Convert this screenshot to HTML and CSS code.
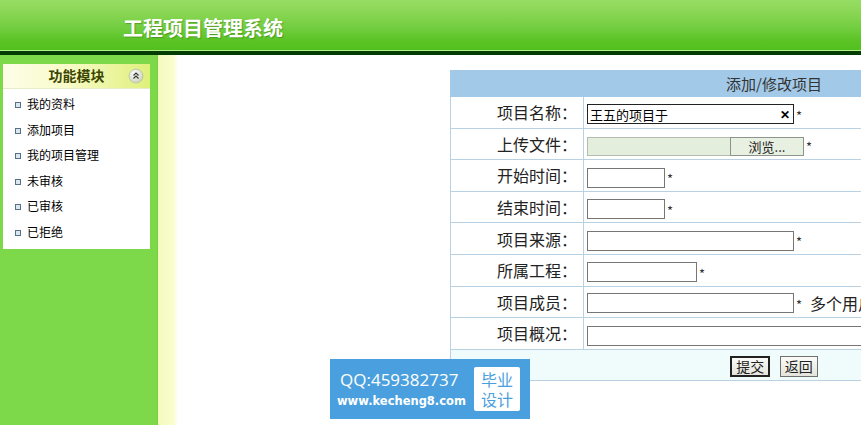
FILE: index.html
```html
<!DOCTYPE html>
<html lang="zh-CN">
<head>
    <meta charset="UTF-8">
    <title>工程项目管理系统</title>
    <link rel="stylesheet" href="styles.css">
</head>
<body>
    <div class="top">
        <h1>工程项目管理系统</h1>
    </div>

    <div class="frame">
        <div class="left">
            <div class="menu">
                <div class="menu-head">
                    功能模块
                    <svg class="fold" width="16" height="16" viewBox="0 0 16 16">
                        <defs>
                            <radialGradient id="knob" cx="40%" cy="35%" r="70%">
                                <stop offset="0" stop-color="#ffffff"/>
                                <stop offset="1" stop-color="#c8d0b8"/>
                            </radialGradient>
                        </defs>
                        <circle cx="8" cy="8" r="7" fill="url(#knob)" stroke="#b8c0a0" stroke-width="0.8"/>
                        <path d="M5.5 7.5 L8 5 L10.5 7.5 M5.5 10.5 L8 8 L10.5 10.5" fill="none" stroke="#333" stroke-width="1.2"/>
                    </svg>
                </div>
                <ul class="menu-list">
                    <li><a href="#">我的资料</a></li>
                    <li><a href="#">添加项目</a></li>
                    <li><a href="#">我的项目管理</a></li>
                    <li><a href="#">未审核</a></li>
                    <li><a href="#">已审核</a></li>
                    <li><a href="#">已拒绝</a></li>
                </ul>
            </div>
        </div>
        <div class="split"></div>
        <div class="main">
            <table class="form">
                <colgroup>
                    <col class="col-label">
                    <col>
                </colgroup>
                <tr>
                    <th colspan="2">添加/修改项目</th>
                </tr>
                <tr>
                    <td class="label">项目名称：</td>
                    <td>
                        <span class="clear-box">
                            <input type="text" class="txt wide" value="王五的项目于">
                            <span class="clear">✕</span>
                        </span><span class="star">*</span>
                    </td>
                </tr>
                <tr>
                    <td class="label">上传文件：</td>
                    <td>
                        <span class="file">
                            <span class="file-path"></span><span class="file-btn">浏览...</span>
                        </span><span class="star">*</span>
                    </td>
                </tr>
                <tr>
                    <td class="label">开始时间：</td>
                    <td><input type="text" class="txt date"><span class="star">*</span></td>
                </tr>
                <tr>
                    <td class="label">结束时间：</td>
                    <td><input type="text" class="txt date"><span class="star">*</span></td>
                </tr>
                <tr>
                    <td class="label">项目来源：</td>
                    <td><input type="text" class="txt wide"><span class="star">*</span></td>
                </tr>
                <tr>
                    <td class="label">所属工程：</td>
                    <td><input type="text" class="txt mid"><span class="star">*</span></td>
                </tr>
                <tr>
                    <td class="label">项目成员：</td>
                    <td><input type="text" class="txt wide"><span class="star">*</span><span class="tip">多个用户以逗号隔开</span></td>
                </tr>
                <tr>
                    <td class="label">项目概况：</td>
                    <td><input type="text" class="txt full"></td>
                </tr>
                <tr>
                    <td colspan="2" class="actions">
                        <button class="btn default">提交</button>
                        <button class="btn">返回</button>
                    </td>
                </tr>
            </table>
        </div>
    </div>

    <div class="ad">
        <div class="ad-text">
            <div class="ad-qq">QQ:459382737</div>
            <div class="ad-site">www.kecheng8.com</div>
        </div>
        <div class="ad-tag">毕业<br>设计</div>
    </div>
</body>
</html>
```

FILE: styles.css
```css
body {
    margin: 0;
    overflow: hidden;
    font-family: "Liberation Sans", "Noto Sans CJK SC", sans-serif;
    background-color: #fff;
}

/* top banner */
.top {
    height: 50px;
    background: linear-gradient(to bottom, #96dd64 0%, #8ad654 25%, #72ce40 55%, #5cc426 80%, #52c01e 100%);
    border-bottom: 1px solid #b4f088;
    box-shadow: 0 4px 0 #033d03;
    margin-bottom: 4px;
}
.top h1 {
    margin: 0;
    padding-left: 123px;
    line-height: 56px;
    font-size: 20px;
    font-weight: bold;
    color: #fff;
    font-family: "Noto Sans CJK SC", sans-serif;
    text-shadow: 1px 1px 1px rgba(40, 90, 10, 0.4);
}

.frame {
    display: flex;
    height: 370px;
}

/* left menu */
.left {
    width: 147px;
    background-color: #7dd84a;
    padding: 9px 7px 0 3px;
}
.menu {
    background-color: #fff;
    height: 185px;
}
.menu-head {
    position: relative;
    height: 24px;
    line-height: 22px;
    text-align: center;
    font-size: 14px;
    font-weight: bold;
    color: #3c4600;
    font-family: "Noto Sans CJK SC", sans-serif;
    background: linear-gradient(to right, #fdfde8 0%, #f8fbc8 45%, #dff07a 100%);
    border-bottom: 1px solid #e6ecc8;
}
.fold {
    position: absolute;
    right: 6px;
    top: 4px;
}
.menu-list {
    list-style: none;
    margin: 0;
    padding: 2px 0 0 12px;
}
.menu-list li {
    line-height: 25.5px;
    font-size: 12px;
    font-family: "Noto Sans CJK SC", sans-serif;
}
.menu-list li::before {
    content: "";
    display: inline-block;
    width: 4px;
    height: 4px;
    border: 1px solid #56708a;
    background-color: #dce6ee;
    margin-right: 6px;
    vertical-align: 1px;
}
.menu-list a {
    color: #000;
    text-decoration: none;
}

.split {
    width: 20px;
    background: linear-gradient(to right, #f4fabc 0%, #fafdd0 80%, #fff 100%);
    border-left: 1px solid #74cc40;
}

/* main form */
.main {
    flex: 1;
    min-width: 0;
    overflow: hidden;
    padding: 15px 0 0 272px;
}
.form {
    width: 648px;
    border-collapse: collapse;
    table-layout: fixed;
    font-family: "Noto Sans CJK SC", sans-serif;
    font-size: 16px;
    color: #222;
}
.col-label {
    width: 133px;
}
.form th {
    height: 25px;
    padding: 0;
    background-color: #a2c9e7;
    font-weight: normal;
    font-size: 15px;
    color: #333;
    border: 1px solid #a2c9e7;
}
.form td {
    height: 30.6px;
    padding: 0 0 0 3px;
    border: 1px solid #b8d2e4;
    white-space: nowrap;
    overflow: hidden;
}
.form td.label {
    padding: 0 6px 0 0;
    text-align: right;
}

.txt {
    box-sizing: border-box;
    height: 20px;
    border: 1px solid #767676;
    padding: 0 2px;
    font-family: "Noto Sans CJK SC", sans-serif;
    font-size: 13px;
    vertical-align: middle;
    outline: none;
}
.txt.wide { width: 207px; }
.txt.date { width: 78px; }
.txt.mid { width: 110px; }
.txt.full { width: 500px; }

.clear-box {
    position: relative;
    display: inline-flex;
    vertical-align: middle;
}
.clear-box .txt {
    border-color: #222;
    padding-right: 18px;
}
.clear {
    position: absolute;
    right: 4px;
    top: 0;
    line-height: 20px;
    font-size: 12px;
    font-weight: bold;
    color: #000;
}

.star {
    font-size: 13px;
    color: #333;
    margin-left: 2px;
    vertical-align: -2px;
}
.tip {
    margin-left: 8px;
    font-size: 16px;
    vertical-align: middle;
}

.file {
    display: inline-flex;
    vertical-align: middle;
    height: 19px;
}
.file-path {
    width: 142px;
    background-color: #e3eedc;
    border: 1px solid #b4bcb0;
    border-right: none;
}
.file-btn {
    width: 72px;
    background-color: #e8f0e2;
    border: 1px solid #8c948c;
    font-size: 13px;
    line-height: 17px;
    text-align: center;
    color: #222;
}

.form td.actions {
    height: 30px;
    padding: 0;
    text-align: center;
    background-color: #f0fbfc;
}
.btn {
    height: 21px;
    padding: 0 4px;
    font-family: "Noto Sans CJK SC", sans-serif;
    font-size: 14px;
    line-height: 17px;
    background: linear-gradient(to bottom, #fbfbf8, #e4e4dc);
    border: 1px solid #707070;
    color: #222;
    margin: 0 3px;
}
.btn.default {
    border: 2px solid #222;
}

/* floating contact badge */
.ad {
    position: absolute;
    left: 330px;
    top: 359px;
    width: 200px;
    height: 60px;
    box-sizing: border-box;
    background-color: #4aa0de;
    display: flex;
    align-items: center;
    padding: 0 0 0 7px;
    color: #fff;
}
.ad-text {
    width: 137px;
}
.ad-qq {
    font-size: 17px;
    line-height: 23px;
    padding-left: 3px;
    font-family: "Open Sans", "DejaVu Sans", sans-serif;
}
.ad-site {
    font-size: 11.5px;
    font-weight: bold;
    line-height: 20px;
    font-family: "DejaVu Sans", sans-serif;
}
.ad-tag {
    width: 46px;
    height: 44px;
    background-color: #fff;
    border-radius: 2px;
    color: #4aa0de;
    font-size: 16px;
    line-height: 20px;
    text-align: center;
    padding-top: 2px;
    box-sizing: border-box;
    font-family: "Noto Sans CJK SC", sans-serif;
}
```
